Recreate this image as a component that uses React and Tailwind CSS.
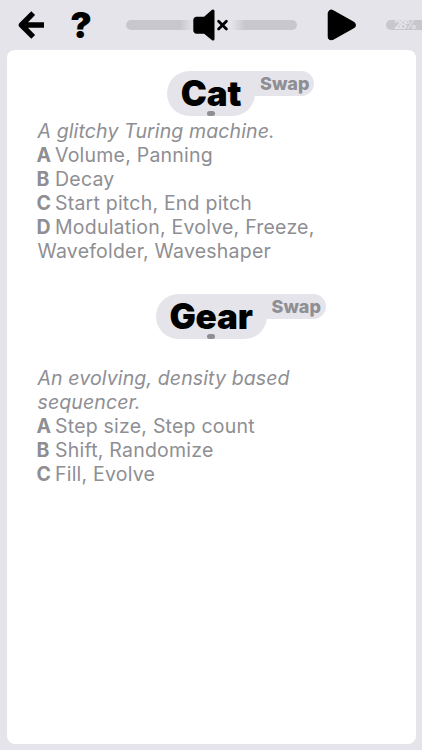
const modules = [
  {
    name: 'Cat',
    pill: 'w-[88px]',
    offset: 'ml-[160.5px]',
    dot: 'left-[40px]',
    gap: 'mt-[2.5px]',
    about: 'A glitchy Turing machine.',
    params: [
      ['A', 'Volume, Panning'],
      ['B', 'Decay'],
      ['C', 'Start pitch, End pitch'],
      ['D', 'Modulation, Evolve, Freeze, Wavefolder, Waveshaper'],
    ],
  },
  {
    name: 'Gear',
    pill: 'w-[111px]',
    offset: 'ml-[149px]',
    dot: 'left-[51px]',
    gap: 'mt-[27px]',
    about: 'An evolving, density based sequencer.',
    params: [
      ['A', 'Step size, Step count'],
      ['B', 'Shift, Randomize'],
      ['C', 'Fill, Evolve'],
    ],
  },
]

function Header() {
  return (
    <header className="flex h-[50px] w-[422px] items-center overflow-hidden">
      <button className="ml-[18px] shrink-0" aria-label="Back">
        <svg width="27" height="28" viewBox="0 0 27 28" fill="none" stroke="#000" strokeWidth="5.4">
          <path d="M15.2 2.2 3.4 14l11.8 11.8M4 14h22" strokeLinejoin="round" />
        </svg>
      </button>
      <button className="ml-[25px] w-[22px] shrink-0 text-[36px] leading-[50px] font-black">?</button>
      <div className="relative ml-[33.5px] h-[10px] w-[171px] shrink-0 rounded-full bg-[linear-gradient(90deg,#c7c7cc_54px,#e5e4ea_68px,#e5e4ea_105px,#c7c7cc_119px)]">
        <svg className="absolute -top-[11px] left-[67.5px]" width="36" height="32" viewBox="0 0 36 32">
          <path
            d="M3.5 9.3h8L20 2v28l-8.5-6.8h-8a1.7 1.7 0 0 1-1.7-1.7V11a1.7 1.7 0 0 1 1.7-1.7Z"
            stroke="#000" strokeWidth="3" strokeLinejoin="round"
          />
          <path d="m25.6 12.2 7.8 7.8m0-7.8L25.6 20" stroke="#000" strokeWidth="2.8" strokeLinecap="round" />
        </svg>
      </div>
      <button className="ml-[30px] shrink-0" aria-label="Play">
        <svg width="30" height="32" viewBox="0 0 30 32">
          <path d="M4.5 4.5v23L25 16Z" stroke="#000" strokeWidth="7.6" strokeLinejoin="round" />
        </svg>
      </button>
      <div className="ml-[29.5px] h-[10px] w-[60px] shrink-0 rounded-full bg-[#c7c7cc] pl-[8px] text-[12px] leading-[10px] font-bold tracking-[-2.4px] text-[#e5e4ea]">
        28%
      </div>
    </header>
  )
}

function Module({ name, pill, offset, dot, gap, about, params }) {
  return (
    <section>
      <div className={`relative flex h-[45px] items-start ${offset}`}>
        <div className={`relative z-10 h-[45px] shrink-0 rounded-full bg-[#e5e4ea] text-center ${pill}`}>
          <h2 className="text-[35px] leading-[45px] font-black tracking-[-0.2px] text-black">{name}</h2>
        </div>
        <button className="-ml-[30px] h-[25px] w-[89px] rounded-r-full bg-[#e5e4ea] pl-[35px] text-left text-[18px] leading-[26px] font-extrabold text-[#8e8e93]">
          Swap
        </button>
        <span className={`absolute bottom-0 z-20 h-[5px] w-[8px] rounded-full bg-[#8e8e93] ${dot}`} />
      </div>
      <div className={`ml-[31px] w-[300px] text-[19.5px] leading-[24px] tracking-[0.22px] text-[#8e8e93] ${gap}`}>
        <p className="tracking-[0.12px] italic">{about}</p>
        {params.map(([key, label]) => (
          <p key={key}>
            <b className="-ml-px inline-block w-[18.5px] font-bold tracking-normal">{key}</b>
            {label}
          </p>
        ))}
      </div>
    </section>
  )
}

export default function App() {
  return (
    <div className="flex h-[750px] w-[422px] flex-col overflow-hidden bg-[#e5e4ea] font-['Inter',sans-serif]">
      <Header />
      <main className="mx-[6.5px] mb-[6.5px] flex flex-1 flex-col gap-[31px] rounded-lg bg-white pt-[21px]">
        {modules.map((m) => (
          <Module key={m.name} {...m} />
        ))}
      </main>
    </div>
  )
}
